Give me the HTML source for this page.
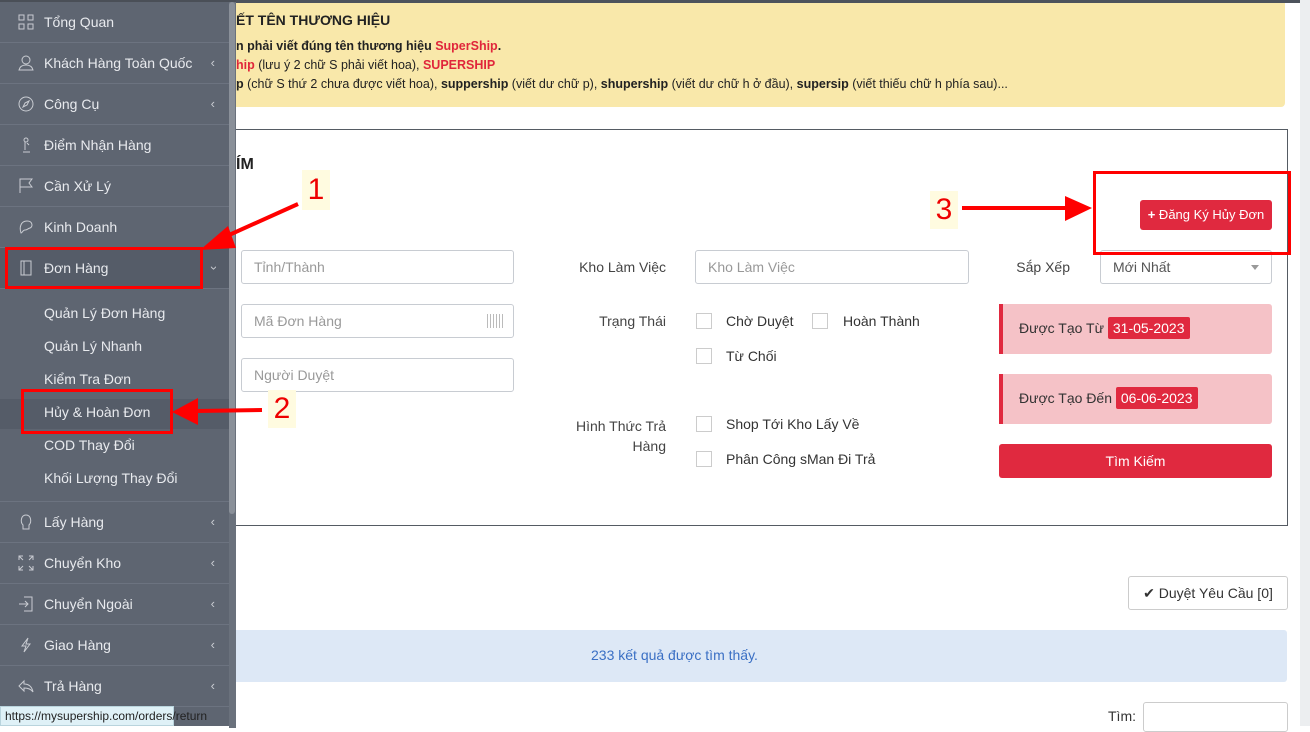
<!DOCTYPE html>
<html><head><meta charset="utf-8"><style>
*{box-sizing:border-box;margin:0;padding:0}
body{width:1310px;height:726px;overflow:hidden;background:#fff;font-family:"Liberation Sans",sans-serif;font-size:14px;color:#333;position:relative}
.abs{position:absolute}
#sb{left:0;top:0;width:236px;height:726px;background:#5e6571;border-top:2px solid #4a4f57}
.it{position:absolute;left:0;width:229px;height:41px;border-bottom:1px solid #6c7380;color:#e8eaee;font-size:14px;line-height:40px;padding-left:44px}
.it svg{position:absolute;left:18px;top:12px}
.it .ch{position:absolute;right:14px;top:0;color:#c9ccd2;font-size:13px}
.sub{position:absolute;left:44px;color:#e8eaee;font-size:14px}
.inp{position:absolute;border:1px solid #c8ccd2;border-radius:3px;height:34px;color:#999;font-size:14px;line-height:32px;padding-left:12px;background:#fff}
.lbl{position:absolute;font-size:14px;color:#444;text-align:right}
.cb{position:absolute;width:16px;height:16px;border:1px solid #ccc;background:#fff}
.red{color:#e0263b}
</style></head><body>
<div class="abs" style="left:0;top:0;width:1310px;height:3px;background:#4d535c"></div>
<div class="abs" style="left:1300px;top:0;width:10px;height:726px;background:#eceef0"></div>
<div class="abs" style="left:236px;top:3px;width:1049px;height:104px;background:#f9e8aa;border-radius:0 0 4px 0"></div>
<div class="abs" style="left:236px;top:12px;font-weight:bold;font-size:14px;color:#222">ẾT TÊN THƯƠNG HIỆU</div>
<div class="abs" style="left:236px;top:39px;font-size:12.5px;color:#222;font-weight:bold">n phải viết đúng tên thương hiệu <span class="red">SuperShip</span>.</div>
<div class="abs" style="left:236px;top:58px;font-size:12.5px;color:#222"><b class="red">hip</b> (lưu ý 2 chữ S phải viết hoa), <b class="red">SUPERSHIP</b></div>
<div class="abs" style="left:236px;top:77px;font-size:12.5px;color:#222"><b>p</b> (chữ S thứ 2 chưa được viết hoa), <b>suppership</b> (viết dư chữ p), <b>shupership</b> (viết dư chữ h ở đầu), <b>supersip</b> (viết thiếu chữ h phía sau)...</div>
<div class="abs" style="left:230px;top:129px;width:1058px;height:397px;border:1px solid #555b63;border-left:none"></div>
<div class="abs" style="left:236px;top:156px;font-weight:bold;font-size:16px;color:#222">ÍM</div>
<div class="inp" style="left:241px;top:250px;width:273px">Tỉnh/Thành</div>
<div class="inp" style="left:241px;top:304px;width:273px">Mã Đơn Hàng<span style="position:absolute;right:10px;top:9px;width:16px;height:14px;background:repeating-linear-gradient(90deg,#bbb 0 1px,#fff 1px 3px)"></span></div>
<div class="inp" style="left:241px;top:358px;width:273px">Người Duyệt</div>
<div class="lbl" style="left:560px;top:259px;width:106px">Kho Làm Việc</div>
<div class="inp" style="left:695px;top:250px;width:274px">Kho Làm Việc</div>
<div class="lbl" style="left:560px;top:313px;width:106px">Trạng Thái</div>
<div class="cb" style="left:696px;top:313px"></div><div class="abs" style="left:726px;top:313px">Chờ Duyệt</div>
<div class="cb" style="left:812px;top:313px"></div><div class="abs" style="left:843px;top:313px">Hoàn Thành</div>
<div class="cb" style="left:696px;top:348px"></div><div class="abs" style="left:726px;top:348px">Từ Chối</div>
<div class="lbl" style="left:560px;top:416px;width:106px;line-height:20px">Hình Thức Trả<br>Hàng</div>
<div class="cb" style="left:696px;top:416px"></div><div class="abs" style="left:726px;top:416px">Shop Tới Kho Lấy Về</div>
<div class="cb" style="left:696px;top:451px"></div><div class="abs" style="left:726px;top:451px">Phân Công sMan Đi Trả</div>
<div class="lbl" style="left:1000px;top:259px;width:70px">Sắp Xếp</div>
<div class="inp" style="left:1100px;top:250px;width:172px;color:#555">Mới Nhất<span style="position:absolute;right:12px;top:14px;border:4px solid transparent;border-top:5px solid #999"></span></div>
<div class="abs" style="left:1140px;top:200px;width:132px;height:30px;background:#e0293f;border-radius:3px;color:#fff;font-size:13px;line-height:30px;text-align:center"><b>+</b> Đăng Ký Hủy Đơn</div>
<div class="abs" style="left:999px;top:304px;width:273px;height:50px;background:#f5c2c7;border-left:4px solid #e0293f;border-radius:0 3px 3px 0"></div>
<div class="abs" style="left:1019px;top:320px">Được Tạo Từ <span style="background:#e0293f;color:#fff;padding:3px 5px;border-radius:2px">31-05-2023</span></div>
<div class="abs" style="left:999px;top:374px;width:273px;height:50px;background:#f5c2c7;border-left:4px solid #e0293f;border-radius:0 3px 3px 0"></div>
<div class="abs" style="left:1019px;top:390px">Được Tạo Đến <span style="background:#e0293f;color:#fff;padding:3px 5px;border-radius:2px">06-06-2023</span></div>
<div class="abs" style="left:999px;top:444px;width:273px;height:34px;background:#e0293f;border-radius:3px;color:#fff;line-height:34px;text-align:center">Tìm Kiếm</div>
<div class="abs" style="left:1128px;top:576px;width:160px;height:34px;border:1px solid #ccc;border-radius:3px;line-height:32px;text-align:center;color:#333">✔ Duyệt Yêu Cầu [0]</div>
<div class="abs" style="left:236px;top:630px;width:1051px;height:52px;background:#dde8f6;border-radius:0 3px 3px 0"></div>
<div class="abs" style="left:591px;top:647px;color:#3a6fc4;font-size:14px">233 kết quả được tìm thấy.</div>
<div class="abs" style="left:1108px;top:708px">Tìm:</div>
<div class="abs" style="left:1143px;top:702px;width:145px;height:30px;border:1px solid #ccc;border-radius:3px"></div>
<div id="sb" class="abs">
<div class="abs" style="left:229px;top:0;width:7px;height:726px;background:#6a717c"></div>
<div class="abs" style="left:229px;top:0;width:6px;height:512px;background:#8a9099;border-radius:3px"></div>
<div class="it" style="top:0"><svg width="16" height="16" fill="none" stroke="#c9ccd2"><rect x="1" y="1" width="5" height="5"/><rect x="10" y="1" width="5" height="5"/><rect x="1" y="10" width="5" height="5"/><rect x="10" y="10" width="5" height="5"/></svg>Tổng Quan</div>
<div class="it" style="top:41px"><svg width="16" height="16" fill="none" stroke="#c9ccd2"><circle cx="8" cy="5" r="4"/><path d="M1 15c1-4 4-5 7-5s6 1 7 5z"/></svg>Khách Hàng Toàn Quốc<span class="ch">‹</span></div>
<div class="it" style="top:82px"><svg width="16" height="16" fill="none" stroke="#c9ccd2"><circle cx="8" cy="8" r="7"/><path d="M11 5l-4 2-2 4 4-2z"/></svg>Công Cụ<span class="ch">‹</span></div>
<div class="it" style="top:123px"><svg width="16" height="16" fill="none" stroke="#c9ccd2"><circle cx="8" cy="3" r="2"/><path d="M7 5v8M5 15h7M9 6l2 2"/></svg>Điểm Nhận Hàng</div>
<div class="it" style="top:164px"><svg width="16" height="16" fill="none" stroke="#c9ccd2"><path d="M2 15V1h12l-3 4 3 4H2"/></svg>Cần Xử Lý</div>
<div class="it" style="top:205px"><svg width="16" height="16" fill="none" stroke="#c9ccd2"><path d="M3 14C1 8 3 2 9 2s6 6 3 7-3 2-5 2-3 3-4 3z"/></svg>Kinh Doanh</div>
<div class="it" style="top:246px;background:#555c68"><svg width="16" height="16" fill="none" stroke="#c9ccd2"><rect x="3" y="1" width="10" height="14"/><path d="M6 1v14"/></svg>Đơn Hàng<span class="ch" style="transform:rotate(-90deg)">‹</span></div>
<div class="abs" style="left:0;top:287px;width:229px;height:213px;background:#5e6571;border-bottom:1px solid #6c7380"></div>
<div class="abs" style="left:0;top:397px;width:229px;height:30px;background:#555c68"></div>
<div class="sub" style="top:303px">Quản Lý Đơn Hàng</div>
<div class="sub" style="top:336px">Quản Lý Nhanh</div>
<div class="sub" style="top:369px">Kiểm Tra Đơn</div>
<div class="sub" style="top:402px">Hủy &amp; Hoàn Đơn</div>
<div class="sub" style="top:435px">COD Thay Đổi</div>
<div class="sub" style="top:468px">Khối Lượng Thay Đổi</div>
<div class="it" style="top:500px"><svg width="16" height="16" fill="none" stroke="#c9ccd2"><path d="M5 11C2 8 3 1 8 1s6 7 3 10v4H5z"/></svg>Lấy Hàng<span class="ch">‹</span></div>
<div class="it" style="top:541px"><svg width="16" height="16" fill="none" stroke="#c9ccd2"><path d="M1 5V1h4M1 1l4 4M15 5V1h-4M15 1l-4 4M1 11v4h4M1 15l4-4M15 11v4h-4M15 15l-4-4"/></svg>Chuyển Kho<span class="ch">‹</span></div>
<div class="it" style="top:582px"><svg width="16" height="16" fill="none" stroke="#c9ccd2"><path d="M6 1h8v14H6M1 8h9M7 5l3 3-3 3"/></svg>Chuyển Ngoài<span class="ch">‹</span></div>
<div class="it" style="top:623px"><svg width="16" height="16" fill="none" stroke="#c9ccd2"><path d="M10 1L4 9h4l-2 6 6-8H8z"/></svg>Giao Hàng<span class="ch">‹</span></div>
<div class="it" style="top:664px"><svg width="16" height="16" fill="none" stroke="#c9ccd2"><path d="M6 3L1 8l5 5V10c4 0 7 1 9 4-1-5-4-8-9-8z"/></svg>Trả Hàng<span class="ch">‹</span></div>
</div>
<div class="abs" style="left:0;top:706px;width:174px;height:20px;background:#dff1f7;border:1px solid #b9d4dd;font-size:12px;line-height:18px;padding-left:4px;color:#222">https://mysupership.com/orders/return</div>
<div class="abs" style="left:5px;top:247px;width:198px;height:42px;border:3px solid #f00"></div>
<div class="abs" style="left:21px;top:389px;width:152px;height:45px;border:3px solid #f00"></div>
<div class="abs" style="left:1093px;top:171px;width:198px;height:84px;border:3px solid #f00"></div>
<div class="abs" style="left:302px;top:170px;width:28px;height:40px;background:#fffbe0;color:#e00;font-size:30px;line-height:40px;text-align:center">1</div>
<div class="abs" style="left:268px;top:390px;width:28px;height:38px;background:#fffbe0;color:#e00;font-size:30px;line-height:38px;text-align:center">2</div>
<div class="abs" style="left:930px;top:191px;width:28px;height:38px;background:#fffbe0;color:#e00;font-size:30px;line-height:38px;text-align:center">3</div>
<svg class="abs" style="left:0;top:0" width="1310" height="726">
<path d="M298 204L218 240" stroke="#f00" stroke-width="4"/><path d="M200 250L228 226 236 248z" fill="#f00"/>
<path d="M262 410L196 411" stroke="#f00" stroke-width="4"/><path d="M172 412L198 398 198 425z" fill="#f00"/>
<path d="M962 208L1070 208" stroke="#f00" stroke-width="4"/><path d="M1092 208L1065 196 1065 221z" fill="#f00"/>
</svg>
</body></html>
